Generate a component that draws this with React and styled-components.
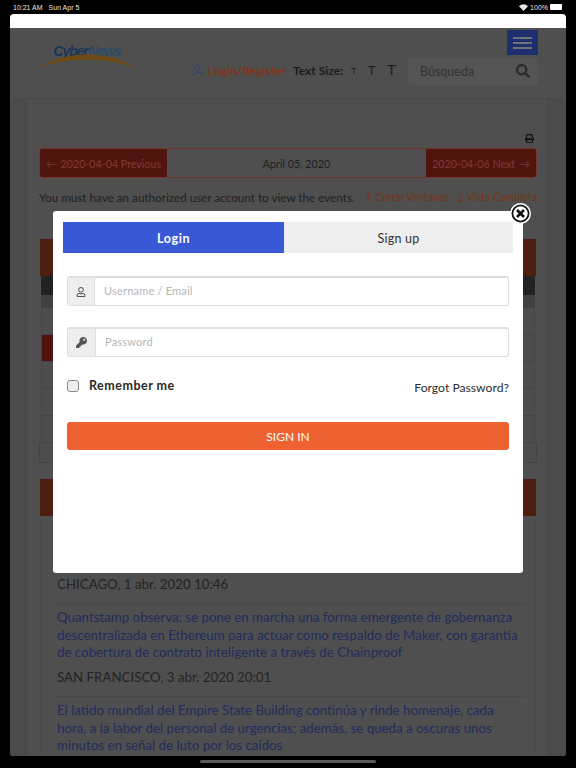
import React from "react";
import styled, { createGlobalStyle } from "styled-components";
import { User } from "lucide-react";
import { FaPrint, FaRegUser, FaKey, FaSearch } from "react-icons/fa";

const FONT = `Lato, "Open Sans", "Liberation Sans", sans-serif`;

const GlobalStyle = createGlobalStyle`
  html, body { margin: 0; padding: 0; background: #000; }
  * { box-sizing: border-box; }
  body { font-family: ${FONT}; }
`;

const Screen = styled.div`
  position: relative;
  width: 576px;
  height: 768px;
  background: #000;
  overflow: hidden;
  display: flex;
  flex-direction: column;
`;

const StatusBar = styled.div`
  height: 14px;
  padding: 0 13px;
  display: flex;
  align-items: center;
  justify-content: space-between;
  color: #e8e8e8;
  font-size: 7px;
  font-family: "Liberation Sans", sans-serif;
`;

const StatusLeft = styled.div`
  display: flex;
  gap: 6px;
`;

const StatusRight = styled.div`
  display: flex;
  align-items: center;
  gap: 2px;
`;

const Battery = styled.span`
  width: 12px;
  height: 6px;
  border-radius: 1px;
  background: #fff;
  margin-right: 1px;
`;

const Window = styled.div`
  height: 742px;
  margin: 0 10px;
  border-radius: 4px 4px 2px 2px;
  overflow: hidden;
  background: #4b4b4b;
  display: flex;
  flex-direction: column;
`;

const AddressBar = styled.div`
  height: 14px;
  flex: none;
  background: #fff;
`;

const Header = styled.header`
  height: 71px;
  flex: none;
  padding: 2px 28px 0 28px;
  background: #4f4f4f;
  border-bottom: 1px solid #494949;
  display: flex;
  justify-content: space-between;
`;

const Logo = styled.div`
  position: relative;
  width: 98px;
  height: 34px;
  margin-top: 15px;
  text-align: center;
`;

const LogoText = styled.span`
  display: block;
  font-family: "Liberation Sans", sans-serif;
  font-weight: 700;
  font-style: italic;
  font-size: 14px;
  letter-spacing: -1px;
  line-height: 13px;
  color: #173658;
  span {
    color: #2c4a66;
  }
`;

const LogoArc = styled.svg`
  position: absolute;
  left: 0;
  top: 9px;
`;

const HeaderRight = styled.div`
  display: flex;
  flex-direction: column;
  align-items: flex-end;
`;

const MenuButton = styled.div`
  width: 31px;
  height: 25px;
  background: #1d2f6f;
  display: flex;
  flex-direction: column;
  justify-content: center;
  align-items: center;
  gap: 3px;
  span {
    width: 19px;
    height: 2px;
    background: #6f7279;
  }
`;

const ToolRow = styled.div`
  display: flex;
  align-items: center;
  margin-top: 2px;
  height: 28px;
`;

const LoginLink = styled.a`
  display: flex;
  align-items: center;
  gap: 3px;
  margin: 0 7px 2px 0;
  font-size: 12px;
  font-weight: 700;
  color: #84331a;
  svg {
    color: #2e4480;
  }
`;

const SizeLabel = styled.span`
  width: 58px;
  margin-bottom: 2px;
  font-size: 12px;
  font-weight: 700;
  color: #1c1c1c;
`;

const SizeLetter = styled.span`
  width: ${(p) => p.$w}px;
  margin-bottom: ${(p) => p.$up}px;
  font-size: ${(p) => p.$s}px;
  line-height: 1;
  color: #1a1a1a;
  font-family: "Liberation Sans", sans-serif;
`;

const SearchBox = styled.div`
  width: 130px;
  height: 28px;
  padding: 0 8px 0 12px;
  background: #545454;
  border-radius: 2px;
  display: flex;
  align-items: center;
  justify-content: space-between;
  font-size: 12.5px;
  color: #333;
  svg {
    color: #2b2b2b;
  }
`;

const Page = styled.main`
  flex: 1;
  margin: 0 18px 0 17px;
  padding: 35px 10px 0 11px;
  background: #4f4f4f;
  border-left: 1px solid #494949;
  border-right: 1px solid #494949;
`;

const PrintRow = styled.div`
  height: 14px;
  padding-right: 3px;
  display: flex;
  justify-content: flex-end;
  color: #161616;
`;

const DayNav = styled.nav`
  height: 30px;
  display: grid;
  grid-template-columns: 127px 1fr 110px;
  border-radius: 3px;
  overflow: hidden;
  border: 1px solid #73352a;
  font-size: 10.7px;
`;

const DayLink = styled.div`
  background: #51150f;
  color: #7e3a32;
  display: flex;
  align-items: center;
  justify-content: center;
  gap: 4px;
`;

const DayTitle = styled.div`
  display: flex;
  align-items: center;
  justify-content: center;
  color: #1e1e1e;
`;

const InfoRow = styled.div`
  height: 61px;
  padding-top: 11px;
  display: flex;
  justify-content: space-between;
  font-size: 11.7px;
  line-height: 17px;
  white-space: nowrap;
  color: #1e1e1e;
`;

const InfoLinks = styled.div`
  display: flex;
  gap: 8px;
  font-size: 10.5px;
  color: #7c3117;
`;

const OrangeBar = styled.div`
  height: 37px;
  margin: 0 1px;
  background: #4d1e0f;
`;

const DarkRow = styled.div`
  height: 19px;
  margin: 0 2px;
  background: #222;
`;

const GreyRow = styled.div`
  height: 13px;
  margin: 0 2px;
  background: #414141;
`;

const Row = styled.div`
  height: ${(p) => p.$h || 27}px;
  margin: ${(p) => (p.$wide ? "0" : "0 2px")};
  background: #4d4d4d;
  border: 1px solid #444;
  border-top: none;
`;

const RedCell = styled.div`
  width: 80px;
  height: 100%;
  background: #52120d;
`;

const News = styled.div`
  margin-top: 16px;
`;

const NewsList = styled.div`
  margin: 0 1px;
  padding: 60px 10px 0 12px;
  border-left: 1px solid #494949;
  border-right: 1px solid #494949;
  font-size: 13.3px;
  line-height: 17.3px;
`;

const Place = styled.div`
  padding: 0 4px 10px;
  border-bottom: 1px solid #474747;
  color: #232323;
`;

const Headline = styled.a`
  display: block;
  padding: 5px 4px 8px;
  color: #212c5e;
  white-space: nowrap;
`;

const HomeBar = styled.div`
  position: absolute;
  left: 200px;
  top: 760px;
  width: 176px;
  height: 3px;
  border-radius: 2px;
  background: #5a5a5a;
`;

const Modal = styled.div`
  position: absolute;
  left: 53px;
  top: 211px;
  width: 470px;
  height: 362px;
  padding: 11px 10px;
  background: #fff;
  border-radius: 3px;
  color: #222;
`;

const CloseButton = styled.svg`
  position: absolute;
  right: -8px;
  top: -8px;
`;

const Tabs = styled.div`
  display: grid;
  grid-template-columns: 221px 229px;
  height: 31px;
  margin-bottom: 23px;
`;

const Tab = styled.div`
  padding-top: 1px;
  display: flex;
  align-items: center;
  justify-content: center;
  font-size: 12.5px;
  font-weight: ${(p) => (p.$active ? 700 : 400)};
  letter-spacing: ${(p) => (p.$active ? "0.6px" : "0.2px")};
  background: ${(p) => (p.$active ? "#3858d6" : "#eeeeee")};
  color: ${(p) => (p.$active ? "#fff" : "#333")};
`;

const Form = styled.form`
  margin: 0 4px;
`;

const InputGroup = styled.div`
  height: 30px;
  margin-bottom: 21px;
  display: flex;
  border: 1px solid #dedede;
  border-top-width: 2px;
  border-radius: 3px;
`;

const Addon = styled.div`
  width: ${(p) => p.$w}px;
  background: #eeeeee;
  border-right: 1px solid #dedede;
  display: flex;
  align-items: center;
  justify-content: center;
  color: #555;
`;

const Placeholder = styled.div`
  flex: 1;
  padding: 0 0 3px 9px;
  display: flex;
  align-items: center;
  font-size: 11px;
  letter-spacing: 0.2px;
  color: #b5b5b5;
`;

const OptionsRow = styled.div`
  height: 44px;
  display: flex;
  justify-content: space-between;
`;

const Remember = styled.label`
  display: flex;
  align-items: center;
  height: 15px;
  gap: 10px;
  font-size: 12.5px;
  font-weight: 700;
  letter-spacing: 0.5px;
  color: #2a2a2a;
`;

const Check = styled.span`
  width: 12px;
  height: 12px;
  border: 1px solid #8a8a8a;
  border-radius: 3px;
  background: #eeeeee;
`;

const Forgot = styled.a`
  margin-top: 2px;
  font-size: 12.2px;
  line-height: 16px;
  color: #2c2c2c;
`;

const SignIn = styled.div`
  height: 28px;
  background: #ee6130;
  border-radius: 3px;
  color: #fff;
  font-size: 12px;
  display: flex;
  align-items: center;
  justify-content: center;
`;

export default function App() {
  return (
    <Screen>
      <GlobalStyle />
      <StatusBar>
        <StatusLeft>
          <span>10:21 AM</span>
          <span>Sun Apr 5</span>
        </StatusLeft>
        <StatusRight>
          <svg width="9" height="7" viewBox="0 0 18 14">
            <path d="M9 14L0 4.5C5-1 13-1 18 4.5Z" fill="#e8e8e8" />
          </svg>
          <span>100%</span>
          <Battery />
        </StatusRight>
      </StatusBar>
      <Window>
        <AddressBar />
        <Header>
          <Logo>
            <LogoText>
              Cyber<span>News</span>
            </LogoText>
            <LogoArc width="98" height="20" viewBox="0 0 98 20">
              <path d="M0 14C28 -4 70 -4 97 14C70 3 28 3 0 14Z" fill="#6e4a14" />
            </LogoArc>
          </Logo>
          <HeaderRight>
            <MenuButton>
              <span />
              <span />
              <span />
            </MenuButton>
            <ToolRow>
              <LoginLink>
                <User size={15} strokeWidth={1.6} />
                Login/Register
              </LoginLink>
              <SizeLabel>Text Size:</SizeLabel>
              <SizeLetter $w={17} $s={9} $up={0}>T</SizeLetter>
              <SizeLetter $w={19} $s={12} $up={1}>T</SizeLetter>
              <SizeLetter $w={21} $s={15} $up={3}>T</SizeLetter>
              <SearchBox>
                Búsqueda
                <FaSearch size={14} />
              </SearchBox>
            </ToolRow>
          </HeaderRight>
        </Header>
        <Page>
          <PrintRow>
            <FaPrint size={9} />
          </PrintRow>
          <DayNav>
            <DayLink>
              <span>←</span>
              <span>2020-04-04 Previous</span>
            </DayLink>
            <DayTitle>April 05, 2020</DayTitle>
            <DayLink>
              <span>2020-04-06 Next</span>
              <span>→</span>
            </DayLink>
          </DayNav>
          <InfoRow>
            <span>You must have an authorized user account to view the events.</span>
            <InfoLinks>
              <span>↑ Cerrar Ventanas</span>
              <span>↓ Vista Completa</span>
            </InfoLinks>
          </InfoRow>
          <OrangeBar />
          <DarkRow />
          <GreyRow />
          <Row />
          <Row>
            <RedCell />
          </Row>
          <Row />
          <Row />
          <Row />
          <Row $h={20} $wide />
          <News>
            <OrangeBar />
            <NewsList>
              <Place>CHICAGO, 1 abr. 2020 10:46</Place>
              <Headline>
                Quantstamp observa: se pone en marcha una forma emergente de gobernanza
                <br />
                descentralizada en Ethereum para actuar como respaldo de Maker, con garantía
                <br />
                de cobertura de contrato inteligente a través de Chainproof
              </Headline>
              <Place>SAN FRANCISCO, 3 abr. 2020 20:01</Place>
              <Headline>
                El latido mundial del Empire State Building continúa y rinde homenaje, cada
                <br />
                hora, a la labor del personal de urgencias; además, se queda a oscuras unos
                <br />
                minutos en señal de luto por los caídos
              </Headline>
            </NewsList>
          </News>
        </Page>
      </Window>
      <HomeBar />
      <Modal>
        <CloseButton width="21" height="21" viewBox="0 0 21 21">
          <circle cx="10.5" cy="10.5" r="10.5" fill="#fff" />
          <circle cx="10.5" cy="10.5" r="8.1" fill="none" stroke="#111" strokeWidth="1.8" />
          <path d="M7 7L14 14M14 7L7 14" stroke="#111" strokeWidth="2.6" />
        </CloseButton>
        <Tabs>
          <Tab $active>Login</Tab>
          <Tab>Sign up</Tab>
        </Tabs>
        <Form>
          <InputGroup>
            <Addon $w={27}>
              <FaRegUser size={10} />
            </Addon>
            <Placeholder>Username / Email</Placeholder>
          </InputGroup>
          <InputGroup>
            <Addon $w={28}>
              <FaKey size={11} />
            </Addon>
            <Placeholder>Password</Placeholder>
          </InputGroup>
          <OptionsRow>
            <Remember>
              <Check />
              Remember me
            </Remember>
            <Forgot>Forgot Password?</Forgot>
          </OptionsRow>
          <SignIn>SIGN IN</SignIn>
        </Form>
      </Modal>
    </Screen>
  );
}
